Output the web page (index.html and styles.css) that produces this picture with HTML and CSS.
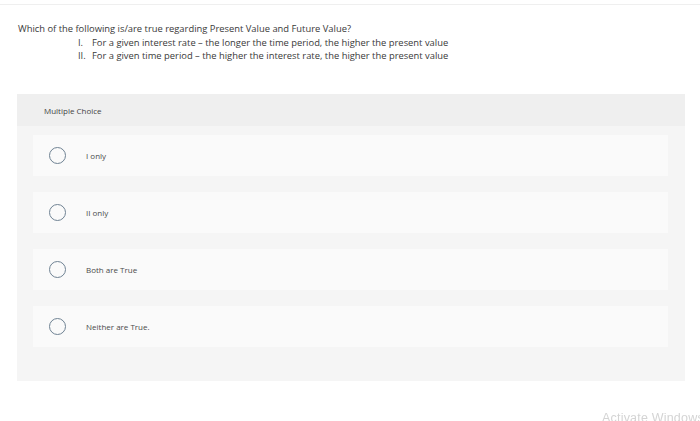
FILE: index.html
```html
<!DOCTYPE html>
<html>
<head>
<meta charset="utf-8">
<link rel="stylesheet" href="styles.css">
</head>
<body>
<div class="topline"></div>
<div class="content">
  <p class="question">Which of the following is/are true regarding Present Value and Future Value?</p>
  <ol class="statements">
    <li><span class="num">I.</span><span>For a given interest rate – the longer the time period, the higher the present value</span></li>
    <li><span class="num">II.</span><span>For a given time period – the higher the interest rate, the higher the present value</span></li>
  </ol>
  <section class="panel">
    <div class="panel-head">Multiple Choice</div>
    <div class="options">
      <div class="option"><span class="radio"></span><span class="label">I only</span></div>
      <div class="option"><span class="radio"></span><span class="label">II only</span></div>
      <div class="option"><span class="radio"></span><span class="label">Both are True</span></div>
      <div class="option"><span class="radio"></span><span class="label">Neither are True.</span></div>
    </div>
  </section>
</div>
<div class="watermark">Activate Windows</div>
</body>
</html>
```
FILE: styles.css
```css
html, body {
  margin: 0;
  padding: 0;
  background: #ffffff;
  font-family: "Open Sans", "Liberation Sans", sans-serif;
  color: #3a3a3a;
  overflow: hidden;
  height: 421px;
}
.topline {
  height: 4px;
  border-bottom: 1px solid #efefef;
}
.content {
  padding: 0 15px 0 17px;
}
.question {
  margin: 17px 0 0 1px;
  font-size: 9.4px;
  line-height: 13px;
}
.statements {
  list-style: none;
  margin: 1px 0 0 0;
  padding: 0 0 0 61px;
  font-size: 9.4px;
  line-height: 13px;
}
.statements li {
  display: flex;
}
.statements .num {
  width: 14px;
  flex: none;
}
.panel {
  margin-top: 32px;
  width: 668px;
  height: 287px;
  background: #f5f5f5;
}
.panel-head {
  height: 32px;
  background: #efefef;
  padding-left: 27px;
  display: flex;
  align-items: center;
  font-size: 8px;
  color: #444;
}
.options {
  padding: 9px 17px 0 16px;
  display: flex;
  flex-direction: column;
  gap: 16px;
}
.option {
  height: 41px;
  background: #fafafa;
  display: flex;
  align-items: center;
  padding-left: 16px;
}
.radio {
  width: 15px;
  height: 15px;
  border: 1.3px solid #6f8293;
  border-radius: 50%;
  flex: none;
}
.label {
  margin-left: 20px;
  font-size: 8px;
  color: #4a4a4a;
}
.watermark {
  position: fixed;
  left: 602px;
  top: 411px;
  font-family: "Liberation Sans", sans-serif;
  font-size: 12.5px;
  letter-spacing: 0.2px;
  color: #d4d4d4;
  white-space: nowrap;
}
```
